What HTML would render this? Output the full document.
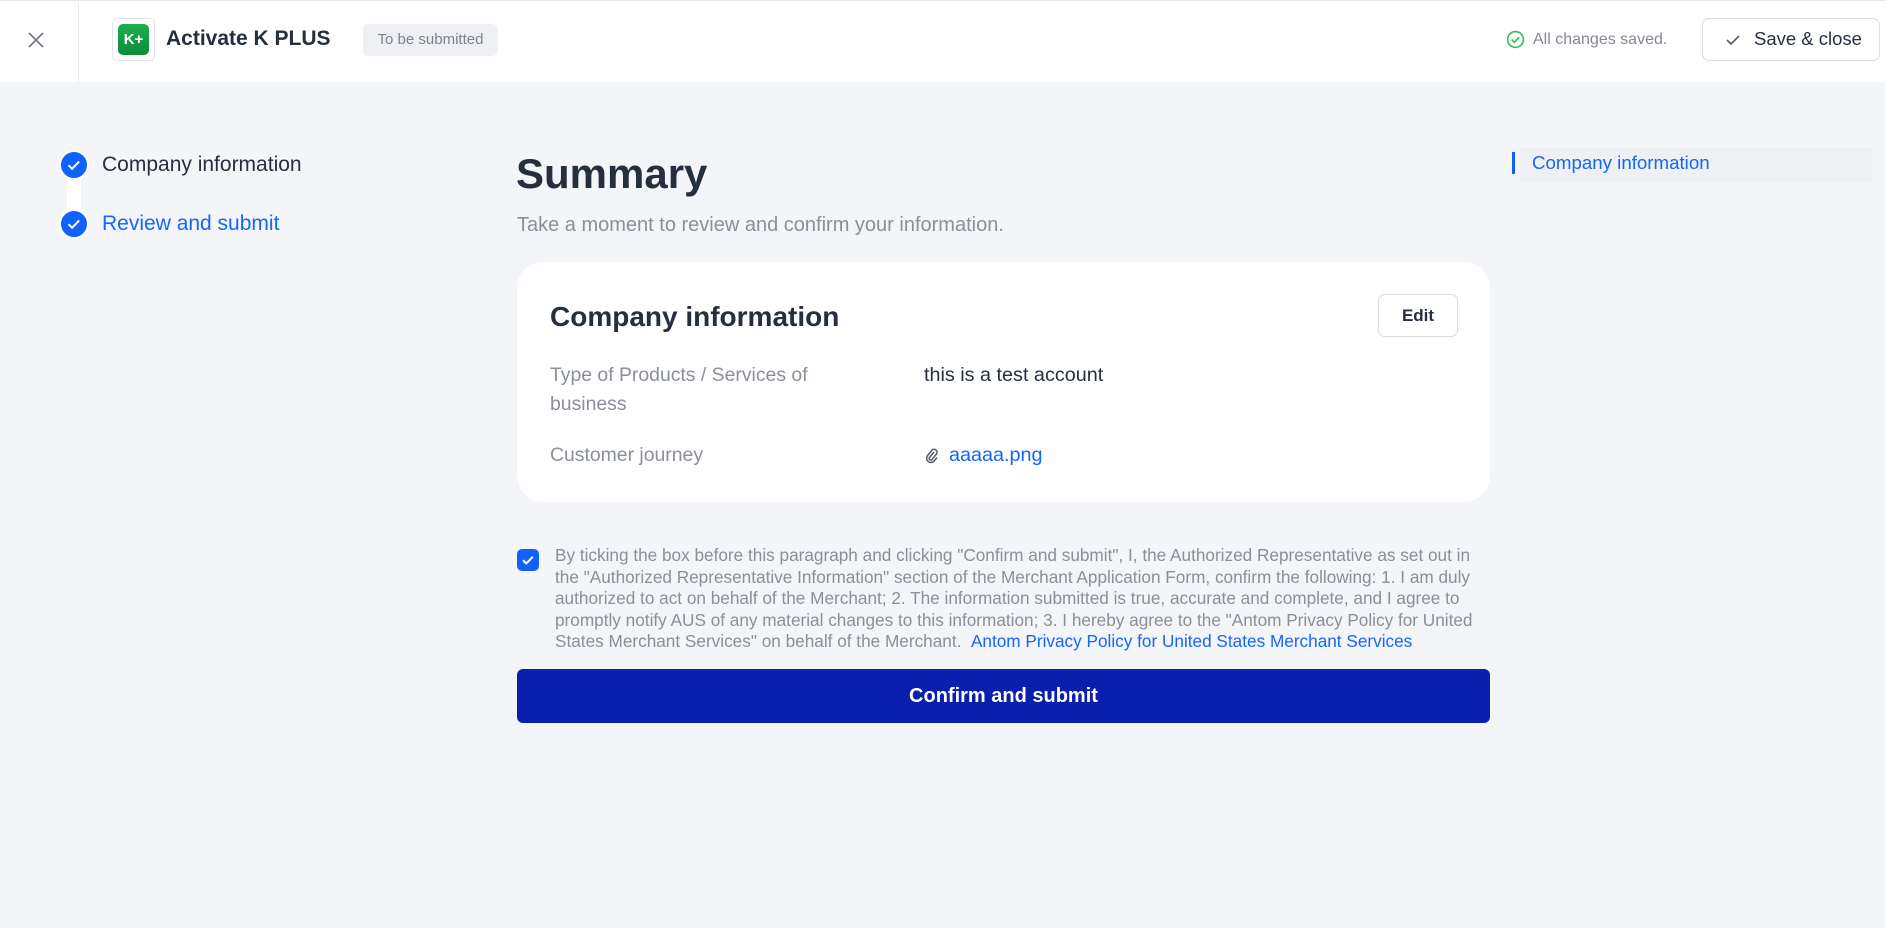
<!DOCTYPE html>
<html><head><meta charset="utf-8"><style>
*{box-sizing:border-box;margin:0;padding:0}
body{width:1885px;height:928px;background:#f4f5f9;font-family:"Liberation Sans",sans-serif;position:relative;overflow:hidden;color:#262f3e}
.abs{position:absolute}
.hdr{left:0;top:0;width:1885px;height:82px;background:#fff;border-top:1px solid #e4e6eb}
</style></head><body>
<div class="abs hdr"></div>
<div class="abs" style="left:78px;top:0;width:1px;height:82px;background:#eceef2"></div>
<svg class="abs" style="left:26px;top:30px" width="20" height="20" viewBox="0 0 20 20"><path d="M3 3L17 17M17 3L3 17" stroke="#777c86" stroke-width="1.8"/></svg>
<div class="abs" style="left:112px;top:18px;width:43px;height:43px;border:1px solid #e3e5ea;border-radius:5px;background:#fff"></div>
<div class="abs" style="left:118px;top:24px;width:31px;height:31px;border-radius:5px;background:linear-gradient(#1fae4e,#0a8c38);color:#fff;font-weight:bold;font-size:15px;line-height:31px;text-align:center">K+</div>
<div class="abs" style="left:166px;top:27px;font-size:21px;font-weight:bold;color:#262f3e">Activate K PLUS</div>
<div class="abs" style="left:363px;top:24px;width:135px;height:32px;border-radius:6px;background:#eff0f4;color:#7d828c;font-size:15px;line-height:32px;text-align:center">To be submitted</div>
<svg class="abs" style="left:1506px;top:30px" width="19" height="19" viewBox="0 0 20 20"><circle cx="10" cy="10" r="8.3" fill="none" stroke="#2fbf5a" stroke-width="1.7"/><path d="M6 10.2l2.8 2.8 5-5.3" fill="none" stroke="#2fbf5a" stroke-width="1.7"/></svg>
<div class="abs" style="left:1533px;top:31px;font-size:16px;color:#838892">All changes saved.</div>
<div class="abs" style="left:1702px;top:18px;width:178px;height:43px;border:1px solid #d9dce3;border-radius:7px;background:#fff"></div>
<svg class="abs" style="left:1725px;top:33px" width="16" height="14" viewBox="0 0 16 14"><path d="M2 7l4 4 8-8" fill="none" stroke="#555a64" stroke-width="1.6"/></svg>
<div class="abs" style="left:1754px;top:28px;font-size:18.5px;color:#262f3e">Save &amp; close</div>

<div class="abs" style="left:67px;top:165px;width:14px;height:60px;background:#fff"></div>
<svg class="abs" style="left:59px;top:150px" width="30" height="30" viewBox="0 0 30 30"><circle cx="15" cy="15" r="14" fill="#0f62fe" stroke="#fff" stroke-width="2"/><path d="M9.5 15.2l3.6 3.6 7-7.3" fill="none" stroke="#fff" stroke-width="2"/></svg>
<div class="abs" style="left:59px;top:209px"><svg width="30" height="30" viewBox="0 0 30 30"><circle cx="15" cy="15" r="14" fill="#0f62fe" stroke="#fff" stroke-width="2"/><path d="M9.5 15.2l3.6 3.6 7-7.3" fill="none" stroke="#fff" stroke-width="2"/></svg></div>
<div class="abs" style="left:102px;top:153px;font-size:21px;color:#262f3e">Company information</div>
<div class="abs" style="left:102px;top:212px;font-size:21px;color:#1467f5">Review and submit</div>

<div class="abs" style="left:516px;top:150px;font-size:42px;font-weight:bold;color:#262f3e">Summary</div>
<div class="abs" style="left:517px;top:214px;font-size:20px;color:#8a8f98">Take a moment to review and confirm your information.</div>

<div class="abs" style="left:517px;top:262px;width:973px;height:240px;background:#fff;border-radius:26px"></div>
<div class="abs" style="left:550px;top:301px;font-size:28px;font-weight:bold;color:#262f3e">Company information</div>
<div class="abs" style="left:1378px;top:294px;width:80px;height:43px;border:1px solid #d9dce3;border-radius:7px;background:#fff;font-size:17px;font-weight:bold;line-height:41px;text-align:center;color:#262f3e">Edit</div>
<div class="abs" style="left:550px;top:361px;font-size:19.4px;line-height:29px;color:#8a8f98">Type of Products / Services of<br>business</div>
<div class="abs" style="left:924px;top:361px;font-size:19.8px;line-height:29px;color:#262f3e">this is a test account</div>
<div class="abs" style="left:550px;top:441px;font-size:19.4px;line-height:29px;color:#8a8f98">Customer journey</div>
<svg class="abs" style="left:925px;top:447px" width="14" height="18" viewBox="0 0 14 18"><path d="M9 5L4.5 10.5a1.6 1.6 0 0 0 2.4 2.1L11.5 7a3 3 0 0 0-4.4-4L2.5 8.6a4.3 4.3 0 0 0 6.3 5.8L12 10.5" fill="none" stroke="#555a64" stroke-width="1.5"/></svg>
<div class="abs" style="left:949px;top:441px;font-size:19.8px;line-height:29px;color:#1467f5">aaaaa.png</div>

<div class="abs" style="left:517px;top:549px;width:22px;height:22px;border-radius:5px;background:#0f62fe"></div>
<svg class="abs" style="left:517px;top:549px" width="22" height="22" viewBox="0 0 22 22"><path d="M6 11.2l3.3 3.3 6.5-6.7" fill="none" stroke="#fff" stroke-width="2"/></svg>
<div class="abs" style="left:555px;top:545px;width:940px;font-size:17.2px;line-height:21.5px;color:#8a8f98;white-space:nowrap">By ticking the box before this paragraph and clicking "Confirm and submit", I, the Authorized Representative as set out in<br>the "Authorized Representative Information" section of the Merchant Application Form, confirm the following: 1. I am duly<br>authorized to act on behalf of the Merchant; 2. The information submitted is true, accurate and complete, and I agree to<br>promptly notify AUS of any material changes to this information; 3. I hereby agree to the "Antom Privacy Policy for United<br>States Merchant Services" on behalf of the Merchant. &nbsp;<span style="color:#1467f5">Antom Privacy Policy for United States Merchant Services</span></div>

<div class="abs" style="left:517px;top:669px;width:973px;height:54px;border-radius:6px;background:#0a1fad;color:#fff;font-size:20px;font-weight:bold;line-height:54px;text-align:center">Confirm and submit</div>

<div class="abs" style="left:1520px;top:148px;width:352px;height:35px;background:#eef0f4"></div>
<div class="abs" style="left:1512px;top:152px;width:3px;height:22px;background:#0f62fe"></div>
<div class="abs" style="left:1532px;top:152px;font-size:18.7px;color:#1467f5">Company information</div>
</body></html>
